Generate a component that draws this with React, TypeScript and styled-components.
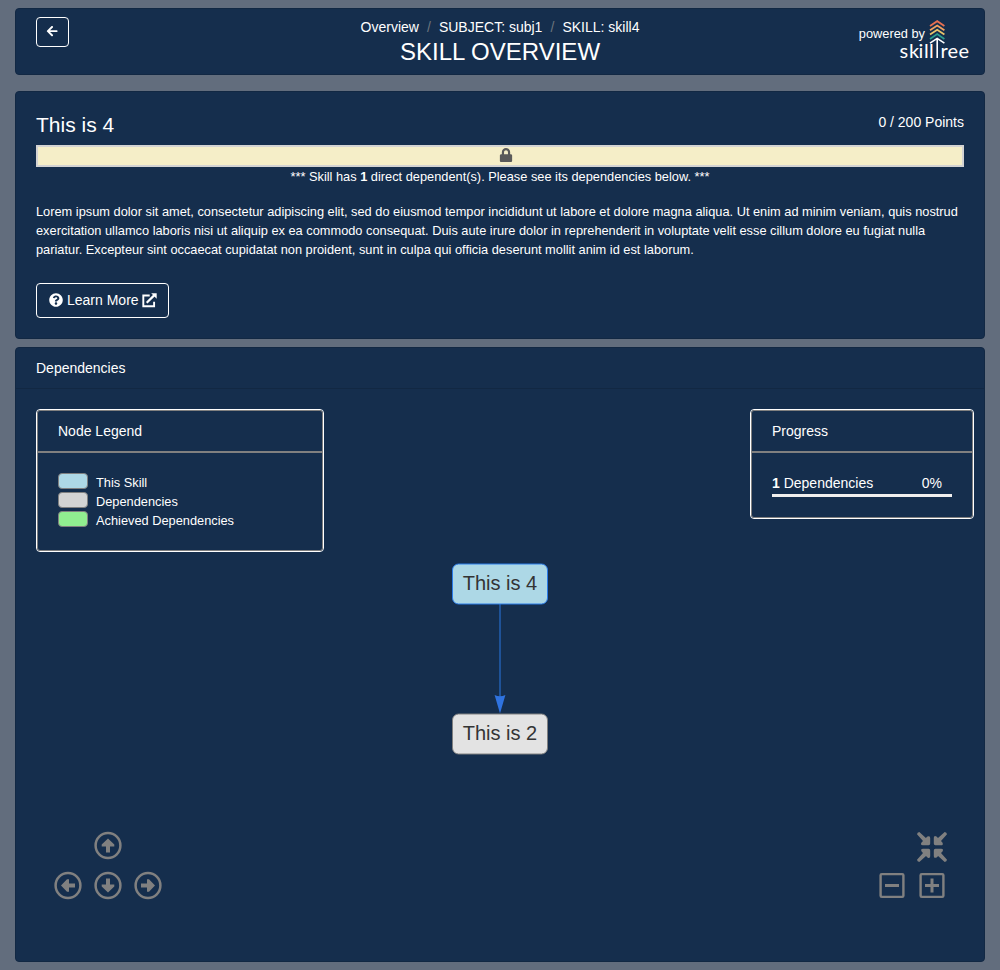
import React from "react";
import styled, { createGlobalStyle } from "styled-components";
import { FaArrowLeft, FaLock, FaQuestionCircle } from "react-icons/fa";

const GlobalStyle = createGlobalStyle`
  * { box-sizing: border-box; }
  body {
    margin: 0;
    background: #626d7d;
    color: #fff;
    font-family: "Liberation Sans", Arial, sans-serif;
    font-size: 14px;
    line-height: 21px;
  }
  svg { display: block; flex: none; }
`;

const Page = styled.main`
  display: flex;
  flex-direction: column;
  padding: 8px 15px;
`;

const Card = styled.section<{ $height: number; $gap?: number }>`
  height: ${(p) => p.$height}px;
  margin-bottom: ${(p) => p.$gap ?? 0}px;
  background: #152e4d;
  border: 1px solid #122843;
  border-radius: 4px;
`;

const Header = styled(Card).attrs({ as: "header" })`
  display: grid;
  grid-template-columns: 1fr auto 1fr;
  padding: 8px 20px 0;
`;

const BackButton = styled.button`
  display: flex;
  align-items: center;
  justify-content: center;
  width: 33px;
  height: 30px;
  padding: 0 0 1px;
  color: #fff;
  background: none;
  border: 1px solid #fff;
  border-radius: 4px;
`;

const Heading = styled.div`
  display: flex;
  flex-direction: column;
  align-items: center;
`;

const Crumbs = styled.nav`
  display: flex;
  white-space: pre;
`;

const Slash = styled.span`
  width: 20px;
  text-align: center;
  color: #6c757d;
`;

const PageTitle = styled.h1`
  margin: 0;
  font-size: 24px;
  font-weight: 400;
  line-height: 28px;
`;

const Brand = styled.div`
  display: flex;
  justify-content: flex-end;
  margin-right: -10px;
`;

const PoweredBy = styled.span`
  margin: 6px -31px 0 0;
  font-size: 12.8px;
`;

const Summary = styled(Card)`
  padding: 20px;
`;

const SkillRow = styled.div`
  display: flex;
  justify-content: space-between;
  height: 33px;
`;

const SkillName = styled.h2`
  margin: 0;
  font-size: 21px;
  font-weight: 400;
  line-height: 25px;
`;

const LockedBar = styled.div`
  display: flex;
  justify-content: center;
  height: 22px;
  padding: 1px 0 0 12px;
  color: #5a5a5a;
  background: #f5eec8;
  border: 2px solid #d3d3d3;
`;

const Notice = styled.p`
  margin: 0;
  font-size: 12.8px;
  line-height: 19px;
  text-align: center;
`;

const Description = styled.p`
  margin: 16px 0 24px;
  font-size: 12.8px;
  line-height: 19px;
`;

const LearnMore = styled.button`
  display: flex;
  align-items: center;
  gap: 4px;
  height: 35px;
  width: 133px;
  padding: 0 12px;
  font: inherit;
  color: #fff;
  background: none;
  border: 1px solid #fff;
  border-radius: 4px;
  white-space: nowrap;

  svg {
    margin-bottom: 1px;
  }

  svg:last-child {
    margin-left: -1px;
  }
`;

const CardTitle = styled.div`
  height: 41px;
  padding: 10px 20px;
  border-bottom: 1px solid #122843;
`;

const Canvas = styled.div`
  position: relative;
  display: flex;
  justify-content: space-between;
  align-items: flex-start;
  height: 572px;
  padding: 20px 10px 0 20px;
`;

const Panel = styled.div<{ $width: number; $height: number }>`
  width: ${(p) => p.$width}px;
  height: ${(p) => p.$height}px;
  border: 1px solid #fff;
  border-radius: 4px;
`;

const PanelInner = styled.div`
  height: 100%;
  border: 1px solid #808080;
  border-radius: 3px;
`;

const PanelTitle = styled.div`
  height: 42px;
  padding: 10px 20px 0;
  border-bottom: 2px solid #808080;
`;

const LegendList = styled.ul`
  margin: 0;
  padding: 20px;
  list-style: none;
`;

const LegendItem = styled.li`
  display: flex;
  gap: 8px;
  height: 19px;
  font-size: 12.8px;
  line-height: 19px;
`;

const Swatch = styled.span<{ $color: string }>`
  width: 30px;
  height: 16px;
  background: ${(p) => p.$color};
  border: 1px solid #808080;
  border-radius: 4px;
`;

const ProgressBody = styled.div`
  padding: 20px 20px 0;
`;

const ProgressLabel = styled.div`
  display: flex;
  justify-content: space-between;
  padding-right: 10px;
`;

const ProgressTrack = styled.div`
  height: 3px;
  background: #f0efee;
`;

const Graph = styled.svg`
  position: absolute;
  left: 433px;
  top: 173px;
`;

const NavPad = styled.div`
  position: absolute;
  left: 36px;
  bottom: 51px;
  display: grid;
  grid-template-columns: repeat(3, 40px);
  grid-template-rows: repeat(2, 40px);
`;

const ZoomPad = styled.div`
  position: absolute;
  right: 36px;
  bottom: 51px;
  display: grid;
  grid-template-columns: 40px 32px;
  grid-template-rows: repeat(2, 40px);
`;

const PadButton = styled.button<{ $column: number; $row: number }>`
  grid-column: ${(p) => p.$column};
  grid-row: ${(p) => p.$row};
  width: 32px;
  height: 32px;
  padding: 0;
  color: #808080;
  background: none;
  border: 0;
`;

const Logo = () => (
  <svg width="80" height="46" viewBox="894 17 80 46" fill="none">
    <g strokeWidth="1.8">
      <path d="M930 26 937.2 21.2 944.4 26" stroke="#e76f51" />
      <path d="M930 30.3 937.2 25.5 944.4 30.3" stroke="#f4a261" />
      <path d="M930 34.6 937.2 29.8 944.4 34.6" stroke="#e9c46a" />
      <path d="M930 38.9 937.2 34.1 944.4 38.9" stroke="#2a9d8f" />
      <path d="M930 43.2 937.2 38.4 944.4 43.2M937.2 38.5V58" stroke="#fff" strokeWidth="1.6" />
    </g>
    <text
      x="899.5 909 918.6 924.1 929 940.4 947.6 958.5"
      y="57.8"
      fill="#fff"
      fontFamily="Lato, sans-serif"
      fontSize="20"
    >
      skillree
    </text>
  </svg>
);

const ExternalIcon = () => (
  <svg width="15" height="15" viewBox="0 0 15 15" fill="none" stroke="#fff" strokeWidth="1.9">
    <path d="M7.7 2.5H1.3V13.3H12.1V8.7" />
    <path d="M4.7 9.8 12.4 2.1" strokeWidth="2.2" />
    <path d="M9.2.3H14.7V5.8Z" fill="#fff" stroke="none" />
  </svg>
);

const ArrowIcon = ({ angle }: { angle: number }) => (
  <svg width="32" height="32" viewBox="-16 -15.5 32 32">
    <circle r="12.4" fill="none" stroke="currentColor" strokeWidth="2.5" />
    <path
      transform={`rotate(${angle})`}
      d="M0-7 6.3-1V1H2V7H-2V1H-6.3V-1Z"
      fill="currentColor"
    />
  </svg>
);

const ZoomIcon = ({ plus }: { plus?: boolean }) => (
  <svg width="32" height="32" viewBox="-16 -15.5 32 32" fill="none" stroke="currentColor">
    <rect x="-11.4" y="-11.4" width="22.8" height="22.8" rx="1.2" strokeWidth="2.4" />
    <path d={plus ? "M-7 0H7M0-7V7" : "M-7 0H7"} strokeWidth="3" />
  </svg>
);

const FitIcon = () => (
  <svg width="32" height="32" viewBox="-16 -17 32 32" fill="currentColor">
    {[0, 90, 180, 270].map((angle) => (
      <path
        key={angle}
        transform={`rotate(${angle})`}
        d="M-15-12.7Q-14.8-14.8-12.7-15L-6.1-9-4.6-10.4Q-1.8-11.8-1.8-9V-3.4Q-1.8-1.8-3.4-1.8H-9.2Q-12-2-10.5-4.5L-9-6Z"
      />
    ))}
  </svg>
);

const legend = [
  { color: "#add8e6", label: "This Skill" },
  { color: "#d3d3d3", label: "Dependencies" },
  { color: "#90ee90", label: "Achieved Dependencies" },
];

const arrows = [
  { name: "Up", angle: 0, column: 2, row: 1 },
  { name: "Left", angle: -90, column: 1, row: 2 },
  { name: "Down", angle: 180, column: 2, row: 2 },
  { name: "Right", angle: 90, column: 3, row: 2 },
];

const DependencyGraph = () => (
  <Graph width="102" height="194" viewBox="449 562 102 194">
    <path d="M500 604V700" stroke="#2b7ce9" strokeOpacity="0.6" strokeWidth="1.6" />
    <path d="M500 713.5 494.6 695Q500 697.5 505.4 695Z" fill="#2f73e0" />
    <g strokeWidth="1">
      <rect x="452.5" y="564" width="95" height="40" rx="6" fill="#add8e6" stroke="#2b7ce9" />
      <rect x="452.5" y="714" width="95" height="40" rx="6" fill="#e3e3e3" stroke="#808080" />
    </g>
    <g fill="#343434" fontSize="20" textAnchor="middle">
      <text x="500" y="590">This is 4</text>
      <text x="500" y="740">This is 2</text>
    </g>
  </Graph>
);

export default function App() {
  return (
    <>
      <GlobalStyle />
      <Page>
        <Header $height={67} $gap={16}>
          <BackButton aria-label="Back">
            <FaArrowLeft size={12.25} />
          </BackButton>
          <Heading>
            <Crumbs>
              <span>Overview</span>
              <Slash>/</Slash>
              <span>SUBJECT: subj1</span>
              <Slash>/</Slash>
              <span>SKILL: skill4</span>
            </Crumbs>
            <PageTitle>SKILL OVERVIEW</PageTitle>
          </Heading>
          <Brand>
            <PoweredBy>powered by</PoweredBy>
            <Logo />
          </Brand>
        </Header>

        <Summary $height={248} $gap={8}>
          <SkillRow>
            <SkillName>This is 4</SkillName>
            <span>0 / 200 Points</span>
          </SkillRow>
          <LockedBar>
            <FaLock size={14} />
          </LockedBar>
          <Notice>
            *** Skill has <b>1</b> direct dependent(s). Please see its dependencies below. ***
          </Notice>
          <Description>
            Lorem ipsum dolor sit amet, consectetur adipiscing elit, sed do eiusmod tempor incididunt ut labore et
            dolore magna aliqua. Ut enim ad minim veniam, quis nostrud exercitation ullamco laboris nisi ut aliquip ex
            ea commodo consequat. Duis aute irure dolor in reprehenderit in voluptate velit esse cillum dolore eu
            fugiat nulla pariatur. Excepteur sint occaecat cupidatat non proident, sunt in culpa qui officia deserunt
            mollit anim id est laborum.
          </Description>
          <LearnMore>
            <FaQuestionCircle size={14} />
            Learn More
            <ExternalIcon />
          </LearnMore>
        </Summary>

        <Card $height={615}>
          <CardTitle>Dependencies</CardTitle>
          <Canvas>
            <Panel $width={288} $height={143}>
              <PanelInner>
                <PanelTitle>Node Legend</PanelTitle>
                <LegendList>
                  {legend.map((item) => (
                    <LegendItem key={item.label}>
                      <Swatch $color={item.color} />
                      {item.label}
                    </LegendItem>
                  ))}
                </LegendList>
              </PanelInner>
            </Panel>
            <Panel $width={224} $height={110}>
              <PanelInner>
                <PanelTitle>Progress</PanelTitle>
                <ProgressBody>
                  <ProgressLabel>
                    <span>
                      <b>1</b> Dependencies
                    </span>
                    <span>0%</span>
                  </ProgressLabel>
                  <ProgressTrack />
                </ProgressBody>
              </PanelInner>
            </Panel>
            <DependencyGraph />
            <NavPad>
              {arrows.map((arrow) => (
                <PadButton key={arrow.name} aria-label={arrow.name} $column={arrow.column} $row={arrow.row}>
                  <ArrowIcon angle={arrow.angle} />
                </PadButton>
              ))}
            </NavPad>
            <ZoomPad>
              <PadButton aria-label="Fit" $column={2} $row={1}>
                <FitIcon />
              </PadButton>
              <PadButton aria-label="Zoom out" $column={1} $row={2}>
                <ZoomIcon />
              </PadButton>
              <PadButton aria-label="Zoom in" $column={2} $row={2}>
                <ZoomIcon plus />
              </PadButton>
            </ZoomPad>
          </Canvas>
        </Card>
      </Page>
    </>
  );
}
